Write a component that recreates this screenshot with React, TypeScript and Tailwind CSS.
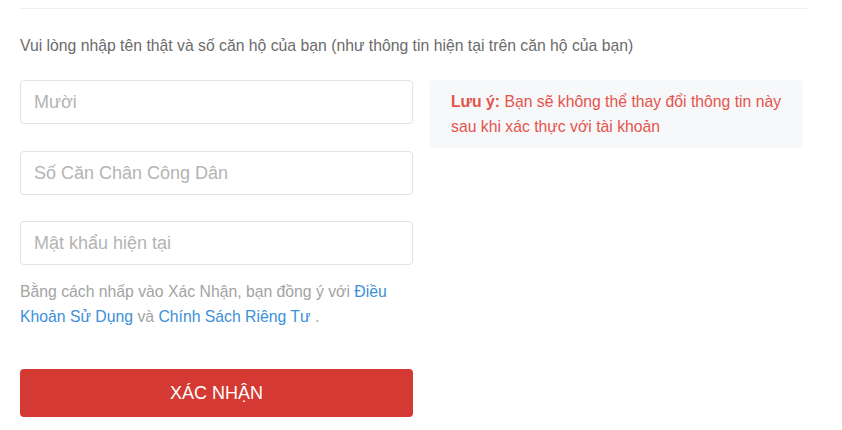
import React from "react";

const fieldClass =
  "w-full h-[44px] rounded border border-[#e3e3e3] bg-white px-[13px] text-[18px] text-[#333] placeholder:text-[#b4b4b4] outline-none";

const App: React.FC = () => {
  return (
    <div className="min-h-[430px] bg-white font-['Liberation_Sans',Arial,sans-serif]">
      <div className="ml-5 w-[787px] pt-2">
        <div className="border-t border-[#edf1f6]" />
        <p className="mt-[26px] text-[15.75px] leading-[22px] text-[#6b6b6b]">
          Vui lòng nhập tên thật và số căn hộ của bạn (như thông tin hiện tại trên căn hộ của bạn)
        </p>
        <div className="mt-[23px] flex gap-[17px]">
          <div className="w-[393px] flex flex-col">
            <input className={fieldClass} placeholder="Mười" />
            <input className={`${fieldClass} mt-[27px]`} placeholder="Số Căn Chân Công Dân" />
            <input className={`${fieldClass} mt-[26px]`} placeholder="Mật khẩu hiện tại" />
            <p className="mt-[14px] text-[15.75px] leading-[25px] text-[#a3a3a3]">
              Bằng cách nhấp vào Xác Nhận, bạn đồng ý với <span className="text-[#3d8fd8]">Điều</span>{" "}
              <span className="text-[#3d8fd8]">Khoản Sử Dụng</span> và{" "}
              <span className="text-[#3d8fd8]">Chính Sách Riêng Tư</span> .
            </p>
            <button className="mt-[40px] h-[48px] w-full rounded bg-[#d43a33] text-[18px] text-white">
              XÁC NHẬN
            </button>
          </div>
          <div className="w-[373px] self-start rounded bg-[#f7f8fa] pl-[21px] pr-3 py-[9px]">
            <p className="text-[15.75px] leading-[25px] text-[#e5534b]">
              <span className="font-bold">Lưu ý:</span> Bạn sẽ không thể thay đổi thông tin này
              sau khi xác thực với tài khoản
            </p>
          </div>
        </div>
      </div>
    </div>
  );
};

export default App;
